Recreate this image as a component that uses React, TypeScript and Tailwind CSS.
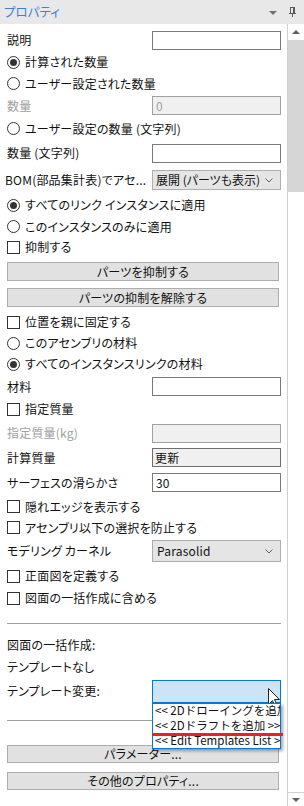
import type { ReactNode } from "react";

const Radio = ({ checked, label }: { checked?: boolean; label: string }) => (
  <div className="flex items-center gap-[5px]">
    <span className="flex h-[13px] w-[13px] items-center justify-center rounded-full border border-[#333333] bg-white">
      {checked && <span className="h-[7px] w-[7px] rounded-full bg-[#333333]" />}
    </span>
    <span>{label}</span>
  </div>
);

const Check = ({ label }: { label: string }) => (
  <div className="flex items-center gap-[5px]">
    <span className="h-[13px] w-[13px] border border-[#333333] bg-white" />
    <span>{label}</span>
  </div>
);

const Chevron = () => (
  <svg width="8" height="5" viewBox="0 0 8 5" className="shrink-0">
    <path d="M0.5 0.5 L4 4 L7.5 0.5" fill="none" stroke="#606060" strokeWidth="1" />
  </svg>
);

const Field = ({ label, muted, children }: { label: string; muted?: boolean; children: ReactNode }) => (
  <>
    <span className={muted ? "whitespace-nowrap text-[#a0a0a0]" : "whitespace-nowrap"}>{label}</span>
    <div className="w-[129px] shrink-0">{children}</div>
  </>
);

const Btn = ({ label }: { label: string }) => (
  <div className="mx-[7px] flex h-[19px] w-[272px] items-center justify-center border border-[#adadad] bg-[#e1e1e1]">
    {label}
  </div>
);

export default function App() {
  return (
    <div className="flex h-[806px] w-[304px] flex-col overflow-hidden bg-white font-['Noto_Sans_CJK_JP',sans-serif] text-[12px] leading-none tracking-[0.2px] text-[#111111] [font-feature-settings:'palt']">
      {/* title bar */}
      <div className="flex h-[24px] shrink-0 items-center bg-[#e8e8e8] pl-[4px] pr-[8px]">
        <span className="flex-1 text-[12.5px] tracking-normal text-[#3b7fd6]">プロパティ</span>
        <svg width="8" height="4" viewBox="0 0 8 4" className="mr-[12px] mt-[1px]">
          <path d="M0 0 H8 L4 4 Z" fill="#707070" />
        </svg>
        <svg width="7" height="10" viewBox="0 0 7 10">
          <path d="M1 0.5 H6" stroke="#5a5a5a" />
          <path d="M1.5 1 V6 M5.5 1 V6" stroke="#5a5a5a" />
          <path d="M4.5 1 V6" stroke="#5a5a5a" />
          <path d="M0 6.5 H7" stroke="#5a5a5a" />
          <path d="M3.5 7 V10" stroke="#5a5a5a" />
        </svg>
      </div>

      <div className="flex flex-1">
        {/* property list */}
        <div className="flex w-[287px] flex-col pt-[5px]">
          <div className="flex h-[22px] items-center justify-between pl-[7px] pr-[6px]">
            <Field label="説明">
              <div className="h-[19px] border border-[#7a7a7a] bg-white" />
            </Field>
          </div>
          <div className="flex h-[22px] items-center pl-[7px]">
            <Radio checked label="計算された数量" />
          </div>
          <div className="flex h-[21px] items-center pl-[7px]">
            <Radio label="ユーザー設定された数量" />
          </div>
          <div className="flex h-[23px] items-center justify-between pl-[7px] pr-[6px]">
            <Field label="数量" muted>
              <div className="flex h-[19px] items-center border border-[#a0a0a0] bg-[#f0f0f0] pl-[3px] text-[#a0a0a0]">0</div>
            </Field>
          </div>
          <div className="flex h-[23px] items-center pl-[7px]">
            <Radio label="ユーザー設定の数量 (文字列)" />
          </div>
          <div className="flex h-[26px] items-center justify-between pl-[7px] pr-[6px]">
            <Field label="数量 (文字列)">
              <div className="h-[19px] border border-[#7a7a7a] bg-white" />
            </Field>
          </div>
          <div className="flex h-[28px] items-center justify-between pl-[5px] pr-[6px]">
            <Field label="BOM(部品集計表)でアセ...">
              <div className="flex h-[20px] items-center justify-between border border-[#adadad] bg-[#e5e5e5] pl-[3px] pr-[7px] tracking-normal">
                <span>展開 (パーツも表示)</span>
                <Chevron />
              </div>
            </Field>
          </div>
          <div className="flex h-[22px] items-center pl-[7px]">
            <Radio checked label="すべてのリンク インスタンスに適用" />
          </div>
          <div className="flex h-[21px] items-center pl-[7px]">
            <Radio label="このインスタンスのみに適用" />
          </div>
          <div className="flex h-[20px] items-center pl-[7px]">
            <Check label="抑制する" />
          </div>
          <div className="mt-[5px]">
            <Btn label="パーツを抑制する" />
          </div>
          <div className="mt-[7px]">
            <Btn label="パーツの抑制を解除する" />
          </div>
          <div className="mt-[4px] flex h-[22px] items-center pl-[7px]">
            <Check label="位置を親に固定する" />
          </div>
          <div className="flex h-[20px] items-center pl-[7px]">
            <Radio label="このアセンブリの材料" />
          </div>
          <div className="flex h-[22px] items-center pl-[7px]">
            <Radio checked label="すべてのインスタンスリンクの材料" />
          </div>
          <div className="flex h-[23px] items-center justify-between pl-[7px] pr-[6px]">
            <Field label="材料">
              <div className="h-[19px] border border-[#7a7a7a] bg-white" />
            </Field>
          </div>
          <div className="flex h-[22px] items-center pl-[7px]">
            <Check label="指定質量" />
          </div>
          <div className="flex h-[26px] items-center justify-between pl-[7px] pr-[6px]">
            <Field label="指定質量(kg)" muted>
              <div className="h-[19px] border border-[#a0a0a0] bg-[#f0f0f0]" />
            </Field>
          </div>
          <div className="flex h-[23px] items-center justify-between pl-[7px] pr-[6px]">
            <Field label="計算質量">
              <div className="flex h-[19px] items-center border border-[#6e6e6e] bg-[#f0f0f0] pl-[2px]">更新</div>
            </Field>
          </div>
          <div className="flex h-[27px] items-center justify-between pl-[7px] pr-[6px]">
            <Field label="サーフェスの滑らかさ">
              <div className="flex h-[19px] items-center border border-[#7a7a7a] bg-white pl-[3px]">30</div>
            </Field>
          </div>
          <div className="flex h-[21px] items-center pl-[7px]">
            <Check label="隠れエッジを表示する" />
          </div>
          <div className="flex h-[21px] items-center pl-[7px]">
            <Check label="アセンブリ以下の選択を防止する" />
          </div>
          <div className="flex h-[26px] items-center justify-between pl-[7px] pr-[6px]">
            <Field label="モデリング カーネル">
              <div className="flex h-[22px] items-center justify-between border border-[#adadad] bg-[#e5e5e5] pl-[4px] pr-[7px]">
                <span>Parasolid</span>
                <Chevron />
              </div>
            </Field>
          </div>
          <div className="flex h-[24px] items-center pl-[7px]">
            <Check label="正面図を定義する" />
          </div>
          <div className="flex h-[20px] items-center pl-[7px]">
            <Check label="図面の一括作成に含める" />
          </div>

          <div className="mx-[7px] mt-[15px] h-px w-[274px] bg-[#a0a0a0]" />

          <div className="mt-[10px] flex h-[22px] items-center pl-[7px]">図面の一括作成:</div>
          <div className="flex h-[22px] items-center pl-[7px]">テンプレートなし</div>
          <div className="mt-[1px] flex h-[24px] items-center justify-between pl-[7px] pr-[6px]">
            <Field label="テンプレート変更:">
              <div className="relative h-[23px] border border-[#0078d7] bg-[#cce4f7]">
                {/* mouse pointer */}
                <svg width="12" height="19" viewBox="0 0 12 19" className="absolute left-[115px] top-[7px]">
                  <path d="M0.5 0.5 V16.5 L4.5 12.5 L7 18 L9 17 L6.5 11.5 H11.5 Z" fill="white" stroke="#222" strokeWidth="1" />
                </svg>
                {/* open dropdown list */}
                <div className="absolute left-[-1px] top-[22px] h-[46px] w-[129px] overflow-hidden border border-[#0078d7] bg-white text-[11.5px] tracking-normal shadow-[2px_2px_3px_rgba(0,0,0,0.35)] [font-feature-settings:normal]">
                  <div className="flex h-[15px] items-center whitespace-nowrap pl-[2px]">&lt;&lt; 2Dドローイングを追加 &gt;&gt;</div>
                  <div className="flex h-[15px] items-center whitespace-nowrap pl-[2px]">&lt;&lt; 2Dドラフトを追加 &gt;&gt;</div>
                  <div className="flex h-[15px] items-center whitespace-nowrap pl-[2px]">&lt;&lt; Edit Templates List &gt;&gt;</div>
                </div>
                {/* red annotation line */}
                <div className="absolute left-[-1px] top-[52px] h-[3px] w-[131px] bg-[#e8202a]" />
              </div>
            </Field>
          </div>

          <div className="mx-[7px] mt-[17px] h-px w-[274px] bg-[#a0a0a0]" />

          <div className="mt-[24px]">
            <div className="mx-[7px] flex h-[18px] w-[272px] items-center justify-center border border-[#adadad] bg-[#e1e1e1]">パラメーター...</div>
          </div>
          <div className="mt-[9px]">
            <div className="mx-[7px] flex h-[18px] w-[272px] items-center justify-center border border-[#adadad] bg-[#e1e1e1]">その他のプロパティ...</div>
          </div>
        </div>

        {/* vertical scrollbar */}
        <div className="flex w-[17px] flex-col border-l border-[#d0d0d0]">
          <div className="flex h-[16px] items-center justify-center bg-white">
            <svg width="8" height="4" viewBox="0 0 8 4">
              <path d="M0 4 H8 L4 0 Z" fill="#606060" />
            </svg>
          </div>
          <div className="h-[152px] bg-[#d6d6d6]" />
          <div className="flex-1 bg-white" />
          <div className="flex h-[14px] items-center justify-center border-t border-[#d0d0d0] bg-white">
            <svg width="8" height="4" viewBox="0 0 8 4">
              <path d="M0 0 H8 L4 4 Z" fill="#606060" />
            </svg>
          </div>
        </div>
      </div>
    </div>
  );
}
